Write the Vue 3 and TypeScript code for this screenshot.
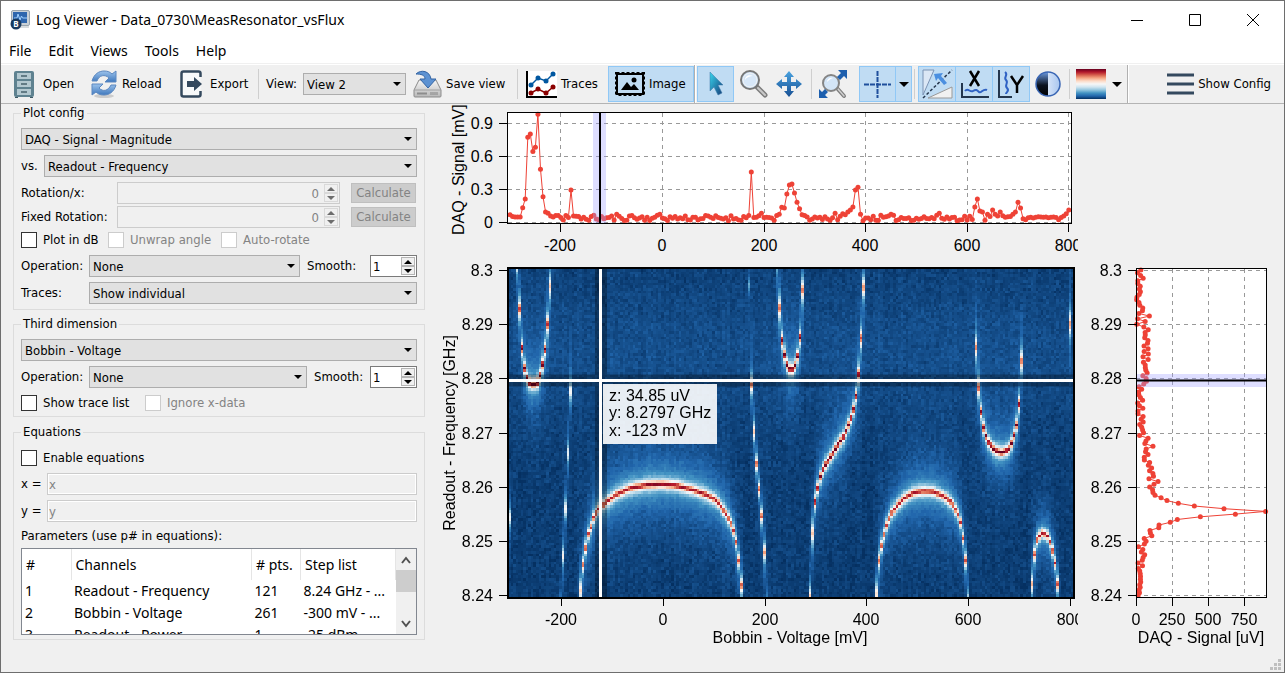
<script setup lang="ts">
import { onMounted, ref } from 'vue'

type Point = [number, number]

const menus = ['File', 'Edit', 'Views', 'Tools', 'Help']

const params = [
  { id: '1', channel: 'Readout - Frequency', pts: '121', steps: '8.24 GHz - ...' },
  { id: '2', channel: 'Bobbin - Voltage', pts: '261', steps: '-300 mV - ...' },
  { id: '3', channel: 'Readout - Power', pts: '1', steps: '-25 dBm' },
]

function makeRandom(seed: number): () => number {
  let a = seed
  return () => {
    a = (a + 0x6d2b79f5) | 0
    let t = Math.imul(a ^ (a >>> 15), 1 | a)
    t = (t + Math.imul(t ^ (t >>> 7), 61 | t)) ^ t
    return ((t ^ (t >>> 14)) >>> 0) / 4294967296
  }
}

/* Horizontal cut: signal [mV] against voltage, one sample every 5 mV */
const cutX: Record<number, number> = {
  0: 0.067, 1: 0.05, 2: 0.045, 3: 0.045, 4: 0.045, 5: 0.13, 6: 0.21, 7: 0.77, 8: 0.8, 9: 0.64,
  10: 0.68, 11: 0.98, 12: 0.48, 13: 0.23, 14: 0.09, 15: 0.08, 16: 0.055, 17: 0.045, 18: 0.06, 19: 0.06,
  22: 0.06, 24: 0.29, 42: 0.07, 48: 0.06, 59: 0.07, 95: 0.455, 94: 0.06, 99: 0.08,
  105: 0.06, 106: 0.07, 107: 0.135, 108: 0.127, 109: 0.255, 110: 0.336, 111: 0.345, 112: 0.264,
  113: 0.18, 114: 0.12, 115: 0.065, 116: 0.06, 128: 0.08, 131: 0.075, 132: 0.065, 133: 0.09,
  134: 0.11, 135: 0.136, 136: 0.29, 137: 0.315, 138: 0.07, 150: 0.07, 169: 0.08,
  183: 0.136, 184: 0.21, 185: 0.1, 186: 0.09, 188: 0.07, 190: 0.11, 191: 0.07, 192: 0.055, 193: 0.09,
  197: 0.05, 198: 0.07, 199: 0.09, 200: 0.18, 201: 0.127, 202: 0.03, 203: 0.02,
  216: 0.02, 217: 0.04, 218: 0.055, 219: 0.075, 220: 0.11,
}
const rndX = makeRandom(11)
const pointsX: Point[] = Array.from({ length: 221 }, (_, i): Point => {
  const noise = 0.012 + rndX() * 0.05
  const value = cutX[i] ?? (i > 203 && i < 216 ? 0.035 + noise * 0.2 : noise)
  return [510 + i * 2.54, 222 - value * 110]
})

/* Vertical cut: signal [uV] against frequency, one sample every 0.5 MHz */
const cutY: Record<number, number> = {
  0: 15, 20: 70, 21: 57, 22: 110, 23: 100, 24: 97, 25: 158, 26: 160, 27: 238, 28: 287, 29: 447, 30: 690, 31: 900,
  32: 611, 33: 405, 34: 294, 35: 215, 36: 174, 37: 132, 38: 118, 39: 115, 40: 95, 41: 125, 42: 153,
  43: 90, 55: 118, 100: 5, 103: 93,
}
const rndY = makeRandom(29)
const pointsY: Point[] = Array.from({ length: 121 }, (_, k): Point => {
  const mean = k < 21 ? 38 : k < 50 ? 105 : k < 59 ? 78 : k < 78 ? 34 : k < 102 ? 66 : 26
  const value = Math.max(4, cutY[k] ?? mean + (rndY() - 0.5) * 48)
  return [1136 + value * 0.144, 595.5 - k * 2.7125]
})

const toLine = (points: Point[]): string => points.map(([x, y]) => `${x.toFixed(1)},${y.toFixed(1)}`).join(' ')

const ticksTop = [
  { x: 560, label: '-200' }, { x: 662, label: '0' }, { x: 764, label: '200' },
  { x: 865, label: '400' }, { x: 967, label: '600' }, { x: 1068, label: '800' },
]
const ticksMap = [
  { x: 561, label: '-200' }, { x: 663, label: '0' }, { x: 765, label: '200' },
  { x: 866, label: '400' }, { x: 968, label: '600' }, { x: 1070, label: '800' },
]
const ticksSignal = [
  { y: 123, label: '0.9' }, { y: 156, label: '0.6' }, { y: 189, label: '0.3' }, { y: 222, label: '0' },
]
const ticksFreq = [
  { y: 270, label: '8.3' }, { y: 324, label: '8.29' }, { y: 378, label: '8.28' }, { y: 433, label: '8.27' },
  { y: 487, label: '8.26' }, { y: 541, label: '8.25' }, { y: 595, label: '8.24' },
]
const ticksSide = [
  { x: 1136, label: '0' }, { x: 1172, label: '250' }, { x: 1208, label: '500' }, { x: 1244, label: '750' },
]

/* Resonance branches across the flux map */
const branches: { gain: number; halo: number; pts: Point[] }[] = [
  { gain: 0.75, halo: 0, pts: [[507, 470], [510, 533], [511, 560]] },
  { gain: 1.15, halo: 0.9, pts: [[516, 245], [519.3, 306], [522, 348], [524.3, 367], [526.7, 377], [530, 383], [533, 384.5], [537, 383], [540, 375], [542.3, 365], [545, 349], [547.3, 327], [550, 288], [553, 200]] },
  { gain: 0.8, halo: 0, pts: [[560, 620], [562.7, 558], [565.3, 510], [567.7, 458], [570.5, 390], [571.5, 370]] },
  { gain: 0.93, halo: 1.3, pts: [[578, 650], [580.7, 590], [583.3, 564], [586, 547], [588, 535], [591, 527], [593.3, 518], [597.7, 510], [606.7, 502], [616.7, 494.3], [630, 488.3], [646.7, 485], [663, 484.3], [676.7, 485.7], [693, 490], [706.7, 495], [716.7, 501], [726.7, 515], [731.7, 525], [734, 532], [736.7, 545], [739, 563], [741.7, 590], [744, 650]] },
  { gain: 0.3, halo: 0, pts: [[748, 270], [750, 300]] },
  { gain: 1, halo: 0.1, pts: [[751, 378], [751.7, 388], [754.3, 437], [757, 469], [759.7, 495], [762.3, 523], [764.7, 560], [767, 620]] },
  { gain: 1.15, halo: 0.8, pts: [[775, 215], [777.7, 273], [780, 317], [782.3, 343], [785, 357], [787.3, 365], [791, 370.7], [795, 365], [797.7, 355], [800.3, 334], [802.7, 285], [805, 200]] },
  { gain: 1.1, halo: 1, pts: [[808, 650], [810.7, 583], [813, 525], [815.3, 501], [818, 487], [820.7, 475], [824, 467], [830, 458], [836.7, 447], [843.3, 437], [848.3, 425], [851.7, 416], [854, 407], [856.7, 392], [859, 370], [861.3, 335], [864, 280], [867, 190]] },
  { gain: 0.95, halo: 1.1, pts: [[874, 650], [876.7, 587], [879.3, 557], [882.3, 542], [884.7, 532], [887.3, 523], [891.7, 513], [896.7, 506], [903.3, 499], [913.3, 493], [923.3, 491], [933, 491.7], [943, 496], [951.7, 503], [957.3, 513], [960.7, 523], [963.3, 540], [966.3, 567], [969, 620]] },
  { gain: 1.1, halo: 1, pts: [[974.5, 320], [976.3, 357], [979, 397], [981.7, 418], [984.3, 432], [988.3, 442], [995, 450.7], [1001.7, 452.7], [1008.3, 450], [1012.3, 442], [1015, 432], [1017.3, 422], [1019.7, 399], [1022.3, 350], [1023, 335]] },
  { gain: 1, halo: 0.8, pts: [[1030, 620], [1032.7, 570], [1035, 550], [1037.3, 539], [1042.7, 532.7], [1047.7, 536.7], [1050.7, 545], [1053.3, 555], [1055.7, 568], [1058.3, 593], [1061, 650]] },
  { gain: 1.4, halo: 0, pts: [[1068.5, 270], [1070.3, 328], [1072, 390]] },
]

const palette: [number, number, number][] = [
  [5, 48, 97], [33, 102, 172], [67, 147, 195], [146, 197, 222], [209, 229, 240], [247, 247, 247],
  [253, 219, 199], [244, 165, 130], [214, 96, 77], [178, 24, 43], [103, 0, 31],
]

function paletteColor(t: number): [number, number, number] {
  const s = Math.min(0.9999, Math.max(0, t)) * (palette.length - 1)
  const i = Math.floor(s)
  const f = s - i
  const a = palette[i]
  const b = palette[i + 1]
  return [a[0] + (b[0] - a[0]) * f, a[1] + (b[1] - a[1]) * f, a[2] + (b[2] - a[2]) * f]
}

const COLS = 222
const ROWS = 121
const heat = ref<HTMLCanvasElement | null>(null)

onMounted(() => {
  const ctx = heat.value?.getContext('2d')
  if (!ctx) return
  const image = ctx.createImageData(COLS, ROWS)
  const rnd = makeRandom(7)
  for (let c = 0; c < COLS; c++) {
    const x = 509.27 + c * 2.5495
    const column = (rnd() - 0.5) * 0.014
    const peaks: { y: number; w: number; a: number; h: number }[] = []
    for (const b of branches) {
      for (let i = 0; i < b.pts.length - 1; i++) {
        const [x0, y0] = b.pts[i]
        const [x1, y1] = b.pts[i + 1]
        if (x >= x0 && x < x1) {
          const slope = Math.abs((y1 - y0) / (x1 - x0))
          peaks.push({
            y: y0 + ((y1 - y0) * (x - x0)) / (x1 - x0),
            w: 3 + Math.min(5, slope * 0.2),
            a: (b.gain * 0.8) / (1 + Math.max(0, slope - 10) * 0.03),
            h: (b.halo * 0.13) / (1 + slope * 0.25),
          })
        }
      }
    }
    for (let r = 0; r < ROWS; r++) {
      const y = 270 + r * 2.7167
      let v = 0.024 + column + 0.032 * Math.exp(-(((y - 350) / 70) ** 2)) + (rnd() + rnd() - 1) * 0.032
      for (const p of peaks) {
        const d = y - p.y
        v += p.a / Math.pow(1 + (d / p.w) ** 2, 0.9) + p.h * Math.exp(-Math.abs(d) / 26)
      }
      const [red, green, blue] = paletteColor(v)
      const o = (r * COLS + c) * 4
      image.data[o] = red
      image.data[o + 1] = green
      image.data[o + 2] = blue
      image.data[o + 3] = 255
    }
  }
  ctx.putImageData(image, 0, 0)
})
</script>

<template>
  <div class="window">
    <header class="titlebar">
      <svg class="app-icon" viewBox="0 0 20 20" aria-hidden="true">
        <rect x="1.500" y="0.500" width="18" height="15" rx="1.500" fill="#c9d0d6" stroke="#9aa5ae" />
        <rect x="3" y="2" width="14" height="11" fill="#2f66ad" />
        <path d="M4 8h3l1-4 2 6 1.500-4 1 2H17" fill="none" stroke="#9fd0ff" />
        <path d="M10 18h9v-2h-9z" fill="#d8dcdf" />
        <circle cx="6" cy="14" r="5.500" fill="#17395f" />
        <text x="6" y="17" text-anchor="middle" font-size="8" font-weight="700" fill="#fff">B</text>
      </svg>
      <h1>Log Viewer - Data_0730\MeasResonator_vsFlux</h1>
      <button class="win" aria-label="Minimize"><svg viewBox="0 0 12 12"><path d="M0 6.500h12" /></svg></button>
      <button class="win" aria-label="Maximize"><svg viewBox="0 0 12 12"><path d="M.5.500h11v11H.5z" /></svg></button>
      <button class="win" aria-label="Close"><svg viewBox="0 0 12 12"><path d="M0 0l12 12M12 0L0 12" /></svg></button>
    </header>

    <nav class="menubar">
      <button v-for="m in menus" :key="m">{{ m }}</button>
    </nav>

    <div class="toolbar" role="toolbar">
      <button class="tool open">
        <svg width="20" height="27" viewBox="0 0 20 27">
          <rect x="0" y="0" width="20" height="26" rx="2" fill="#5f8290" />
          <path d="M1 26h3v1H1zM16 26h3v1h-3z" fill="#3d5864" />
          <path d="M3 2h14v6H3zM3 10h14v6H3zM3 18h14v6H3z" fill="#b3c8d0" />
          <path d="M7 5h6M7 13h6M7 21h6" stroke="#48616c" stroke-width="1.500" />
        </svg>
        Open
      </button>
      <button class="tool reload">
        <svg width="26" height="28" viewBox="0 0 26 28">
          <defs>
            <linearGradient id="reloadFill" x1="0" y1="0" x2="0" y2="1">
              <stop offset="0" stop-color="#9cc3ec" /><stop offset="1" stop-color="#3f78bd" />
            </linearGradient>
          </defs>
          <ellipse cx="13" cy="26" rx="10" ry="2" fill="#000" opacity=".15" />
          <path d="M1 11C3 4 8 1 13 1c4 0 6 1 8 3l4-3v11H14l4-4c-4-4-10-3-12 3z" fill="url(#reloadFill)" stroke="#5c88c0" />
          <path d="M25 15c-2 7-7 10-12 10-4 0-6-1-8-3l-4 3V14h11l-4 4c4 4 9 3 12-3z" fill="url(#reloadFill)" stroke="#5c88c0" />
        </svg>
        Reload
      </button>
      <button class="tool export">
        <svg width="23" height="28" viewBox="0 0 23 28">
          <path d="M20.500 7V3.500q0-2-2-2h-15q-2 0-2 2v21q0 2 2 2h15q2 0 2-2V21" fill="#f7f9fa" stroke="#34495e" stroke-width="2.500" />
          <path d="M7 11h7V7l8 7-8 7v-4H7z" fill="#34495e" />
        </svg>
        Export
      </button>
      <span class="sep"></span>
      <label class="view-label" for="view">View:</label>
      <span class="select view-select"><select id="view"><option>View 2</option></select></span>
      <button class="tool save">
        <svg width="29" height="28" viewBox="0 0 29 28">
          <defs>
            <linearGradient id="diskFill" x1="0" y1="0" x2="0" y2="1">
              <stop offset="0" stop-color="#f6f6f6" /><stop offset="1" stop-color="#b8b8b8" />
            </linearGradient>
          </defs>
          <path d="M6 10h17l5 10v6q0 1-1 1H2q-1 0-1-1v-6z" fill="url(#diskFill)" stroke="#8b8b8b" />
          <path d="M1 20h27" stroke="#a0a0a0" />
          <path d="M4 23.500h10" stroke="#8d8d8d" stroke-width="2" />
          <path d="M18 22v3M20 22v3M22 22v3M24 22v3" stroke="#858585" />
          <path d="M3 4c5-5 14-3 15 5h5l-8 9-8-9h5c0-4-4-5-9-5z" fill="#5d92d2" stroke="#3465a4" />
        </svg>
        Save view
      </button>
      <span class="sep"></span>
      <button class="tool traces">
        <svg width="31" height="27" viewBox="0 0 31 27">
          <rect width="31" height="27" fill="#fff" />
          <path d="M1 0v26h30" fill="none" stroke="#000" stroke-width="2" />
          <path d="M5 14l7-7 8 3 7-7" fill="none" stroke="#0057a0" stroke-width="1.500" />
          <path d="M5 22l7-4 8 4 7-6" fill="none" stroke="#8b0000" stroke-width="1.500" />
          <g fill="#0057a0"><circle cx="5" cy="14" r="2.500" /><circle cx="12" cy="7" r="2.500" /><circle cx="20" cy="10" r="2.500" /><circle cx="27" cy="3" r="2.500" /></g>
          <g fill="#8b0000"><circle cx="5" cy="22" r="2.500" /><circle cx="12" cy="18" r="2.500" /><circle cx="20" cy="22" r="2.500" /><circle cx="27" cy="16" r="2.500" /></g>
        </svg>
        Traces
      </button>
      <button class="tool image on" aria-pressed="true">
        <svg width="30" height="24" viewBox="0 0 30 24">
          <rect x="2" y="2" width="26" height="20" fill="none" stroke="#000" stroke-width="2" />
          <rect x="1.500" y="1.500" width="27" height="21" fill="none" stroke="#000" stroke-width="3" stroke-dasharray="3 2" />
          <rect x="4" y="4" width="22" height="16" fill="#c0dcf3" />
          <path d="M6 18l6-8 4 5 3-3 5 6z" />
          <circle cx="19" cy="8" r="2.500" />
        </svg>
        Image
      </button>
      <span class="sep full"></span>
      <button class="tool pointer on" aria-label="Select" aria-pressed="true">
        <svg width="18" height="26" viewBox="0 0 18 26">
          <defs>
            <linearGradient id="pointerFill" x1="0" y1="0" x2="1" y2="1">
              <stop offset="0" stop-color="#38d6ee" /><stop offset="1" stop-color="#143c78" />
            </linearGradient>
          </defs>
          <path d="M3 1v19l4-4 4 8 4-2-4-8h5z" fill="url(#pointerFill)" stroke="#3b76a6" stroke-width=".5" />
        </svg>
      </button>
      <button class="tool glass" aria-label="Zoom">
        <svg width="30" height="30" viewBox="0 0 30 30">
          <path d="M18 17l9 9" stroke="#7d7d7d" stroke-width="5" stroke-linecap="round" />
          <path d="M20 19l7 7" stroke="#c8c8c8" stroke-width="2" stroke-linecap="round" />
          <circle cx="12" cy="11" r="9" fill="#c5dcf3" stroke="#777" stroke-width="2" />
          <circle cx="12" cy="11" r="7" fill="#d7e7f8" stroke="#f4f4f4" />
          <path d="M7 11c0-4 4-6 8-4-3 0-6 1-8 4z" fill="#fff" />
        </svg>
      </button>
      <button class="tool move" aria-label="Pan">
        <svg width="26" height="26" viewBox="0 0 26 26">
          <defs>
            <linearGradient id="moveFill" x1="0" y1="0" x2="0" y2="1">
              <stop offset="0" stop-color="#4aa3e0" /><stop offset="1" stop-color="#174f93" />
            </linearGradient>
          </defs>
          <path d="M13 0l5 6h-3v5h5V8l6 5-6 5v-3h-5v5h3l-5 6-5-6h3v-5H6v3l-6-5 6-5v3h5V6H8z" fill="url(#moveFill)" />
        </svg>
      </button>
      <span class="sep"></span>
      <button class="tool autozoom" aria-label="Autoscale">
        <svg width="30" height="30" viewBox="0 0 30 30">
          <path d="M18 18l8 9" stroke="#7d7d7d" stroke-width="4" stroke-linecap="round" />
          <path d="M20 20l6 7" stroke="#d0d0d0" stroke-width="1.500" stroke-linecap="round" />
          <circle cx="13" cy="14" r="8" fill="#d3e5f7" stroke="#858585" stroke-width="2" />
          <path d="M9 13c0-3 3-5 6-4-3 1-4 2-6 4z" fill="#fff" />
          <path d="M29 1v9l-3-3-4 4-3-3 4-4-3-3zM1 29v-9l3 3 3-3 3 3-3 3 3 3z" fill="#1d5fae" />
        </svg>
      </button>
      <button class="tool cross on" aria-label="Cursor" aria-pressed="true">
        <svg width="27" height="27" viewBox="0 0 27 27">
          <path d="M13.500 0v27M0 13.500h27" stroke="#1f4f9c" stroke-width="2" stroke-dasharray="5 1" />
        </svg>
      </button>
      <button class="tool drop on" aria-label="Cursor options"><i class="caret"></i></button>
      <span class="sep"></span>
      <button class="tool opt on" aria-label="Rotate" aria-pressed="true">
        <svg width="31" height="30" viewBox="0 0 31 30">
          <path d="M1 1h11L1 26z" fill="#dbe7f5" stroke="#7b93b4" />
          <path d="M6 29l24-11v11z" fill="#f1f1f1" stroke="#999" />
          <path d="M1 29L30 1" stroke="#25364d" stroke-width="1.500" stroke-dasharray="3 2" />
          <path d="M12 5l9-1-2 3 6 7-3 2-6-7-2 3z" fill="#4b8fe0" />
        </svg>
      </button>
      <button class="tool opt on" aria-label="Subtract X" aria-pressed="true">
        <svg width="29" height="30" viewBox="0 0 29 30">
          <path d="M2 14v14h27" fill="none" stroke="#24364d" stroke-width="2" />
          <path d="M10 2l9 15M19 2L10 17" stroke="#000" stroke-width="2.500" />
          <path d="M5 22c3-4 5 2 8 0s4-1 6 1 4-4 8-2" fill="none" stroke="#2f62c4" stroke-width="2" />
        </svg>
      </button>
      <button class="tool opt on" aria-label="Subtract Y" aria-pressed="true">
        <svg width="29" height="30" viewBox="0 0 29 30">
          <path d="M2 1v27h13" fill="none" stroke="#24364d" stroke-width="2" />
          <path d="M8 3c4 3-2 5 1 8s-2 5 1 8-1 4-1 6" fill="none" stroke="#2f62c4" stroke-width="2" />
          <path d="M14 7l6 9 6-9M20 16v8" fill="none" stroke="#000" stroke-width="2.500" />
        </svg>
      </button>
      <button class="tool contrast" aria-label="Contrast">
        <svg width="28" height="28" viewBox="0 0 28 28">
          <defs>
            <linearGradient id="darkHalf" x1="0" y1="0" x2="0" y2="1">
              <stop offset="0" stop-color="#6d9be0" /><stop offset=".55" stop-color="#0a1220" /><stop offset="1" stop-color="#000" />
            </linearGradient>
            <linearGradient id="lightHalf" x1="0" y1="0" x2="1" y2="0">
              <stop offset="0" stop-color="#fff" /><stop offset="1" stop-color="#a9c6ef" />
            </linearGradient>
          </defs>
          <circle cx="14" cy="14" r="12" fill="url(#lightHalf)" />
          <path d="M14 2a12 12 0 0 0 0 24z" fill="url(#darkHalf)" />
          <circle cx="14" cy="14" r="12" fill="none" stroke="#3a66b4" stroke-width="1.500" />
        </svg>
      </button>
      <span class="sep"></span>
      <button class="tool cmap" aria-label="Color map">
        <span class="gradient"></span>
        <i class="caret"></i>
      </button>
      <span class="sep full"></span>
      <button class="tool config">
        <svg width="27" height="22" viewBox="0 0 27 22">
          <path d="M0 2h27M0 11h27M0 20h27" stroke="#34495e" stroke-width="3" />
        </svg>
        Show Config
      </button>
    </div>

    <main class="body">
      <form class="side">
        <fieldset>
          <legend>Plot config</legend>
          <span class="select"><select aria-label="Signal"><option>DAQ - Signal - Magnitude</option></select></span>
          <div class="row">
            <label class="vs" for="versus">vs.</label>
            <span class="select"><select id="versus"><option>Readout - Frequency</option></select></span>
          </div>
          <div class="rotations">
            <label for="rot">Rotation/x:</label>
            <span class="spin off">
              <input id="rot" type="text" value="0" disabled>
              <span class="steps"><button type="button" disabled aria-label="Increase"></button><button type="button" disabled aria-label="Decrease"></button></span>
            </span>
            <button type="button" class="calc" disabled>Calculate</button>
            <label for="fixed">Fixed Rotation:</label>
            <span class="spin off">
              <input id="fixed" type="text" value="0" disabled>
              <span class="steps"><button type="button" disabled aria-label="Increase"></button><button type="button" disabled aria-label="Decrease"></button></span>
            </span>
            <button type="button" class="calc" disabled>Calculate</button>
          </div>
          <div class="checks tight">
            <label class="c-db"><input type="checkbox">Plot in dB</label>
            <label class="c-unwrap"><input type="checkbox" disabled>Unwrap angle</label>
            <label><input type="checkbox" disabled>Auto-rotate</label>
          </div>
          <div class="row after-checks">
            <label class="key" for="op1">Operation:</label>
            <span class="select"><select id="op1"><option>None</option></select></span>
            <label class="smooth" for="smooth1">Smooth:</label>
            <span class="spin small">
              <input id="smooth1" type="text" value="1">
              <span class="steps"><button type="button" aria-label="Increase"></button><button type="button" aria-label="Decrease"></button></span>
            </span>
          </div>
          <div class="row">
            <label class="key" for="traces">Traces:</label>
            <span class="select"><select id="traces"><option>Show individual</option></select></span>
          </div>
        </fieldset>

        <fieldset>
          <legend>Third dimension</legend>
          <span class="select"><select aria-label="Third dimension channel"><option>Bobbin - Voltage</option></select></span>
          <div class="row">
            <label class="key" for="op2">Operation:</label>
            <span class="select"><select id="op2"><option>None</option></select></span>
            <label class="smooth near" for="smooth2">Smooth:</label>
            <span class="spin small">
              <input id="smooth2" type="text" value="1">
              <span class="steps"><button type="button" aria-label="Increase"></button><button type="button" aria-label="Decrease"></button></span>
            </span>
          </div>
          <div class="checks">
            <label class="c-list"><input type="checkbox">Show trace list</label>
            <label><input type="checkbox" disabled>Ignore x-data</label>
          </div>
        </fieldset>

        <fieldset class="equations">
          <legend>Equations</legend>
          <div class="checks first">
            <label><input type="checkbox">Enable equations</label>
          </div>
          <div class="row after-checks">
            <label class="eq" for="eqx">x =</label>
            <input id="eqx" class="formula" type="text" value="x" disabled>
          </div>
          <div class="row">
            <label class="eq" for="eqy">y =</label>
            <input id="eqy" class="formula" type="text" value="y" disabled>
          </div>
          <p class="caption">Parameters (use p# in equations):</p>
          <div class="list">
            <div class="scroller">
              <table>
                <thead>
                  <tr><th class="col-id">#</th><th>Channels</th><th class="col-pts"># pts.</th><th class="col-steps">Step list</th></tr>
                </thead>
                <tbody>
                  <tr v-for="p in params" :key="p.id">
                    <td>{{ p.id }}</td><td>{{ p.channel }}</td><td>{{ p.pts }}</td><td>{{ p.steps }}</td>
                  </tr>
                </tbody>
              </table>
            </div>
            <div class="scrollbar">
              <button type="button" aria-label="Scroll up"><svg viewBox="0 0 10 10"><path d="M1 8l4-5 4 5" /></svg></button>
              <span class="thumb"></span>
              <button type="button" aria-label="Scroll down"><svg viewBox="0 0 10 10"><path d="M1 2l4 5 4-5" /></svg></button>
            </div>
          </div>
        </fieldset>
      </form>

      <section class="plots">
        <svg class="plot" viewBox="430 104 648 158" role="img" aria-label="Signal against voltage">
          <rect x="507" y="112" width="565" height="111" fill="#fff" />
          <g class="grid">
            <path v-for="t in ticksTop" :key="t.label" :d="`M${t.x + 0.5} 113V223`" />
            <path v-for="t in ticksSignal" :key="t.label" :d="`M508 ${t.y + 0.5}H1071`" />
          </g>
          <polyline class="trace" :points="toLine(pointsX)" />
          <g class="dots"><circle v-for="(p, i) in pointsX" :key="i" :cx="p[0]" :cy="p[1]" r="2.500" /></g>
          <rect x="593" y="113" width="13" height="110" class="band" />
          <path d="M600 113V223" class="marker" />
          <rect x="507.500" y="112.500" width="564" height="111" class="frame" />
          <g class="tick">
            <path v-for="t in ticksTop" :key="t.label" :d="`M${t.x + 0.5} 223v9`" />
            <path v-for="t in ticksSignal" :key="t.label" :d="`M507 ${t.y + 0.5}h-8`" />
          </g>
          <text v-for="t in ticksTop" :key="t.label" :x="t.x" y="251" text-anchor="middle">{{ t.label }}</text>
          <text v-for="t in ticksSignal" :key="t.label" x="493" :y="t.y + 6" text-anchor="end">{{ t.label }}</text>
          <text transform="translate(464 235) rotate(-90)">DAQ - Signal [mV]</text>
        </svg>
        <span></span>
        <svg class="plot" viewBox="430 262 648 390" role="img" aria-label="Signal map of frequency against voltage">
          <foreignObject x="508" y="269" width="566" height="328">
            <canvas ref="heat" class="heat" :width="COLS" :height="ROWS"></canvas>
          </foreignObject>
          <path d="M601 269V597M509 380.500H1074" stroke="#000" stroke-width="12" opacity=".3" />
          <rect x="508" y="268" width="566" height="330" fill="none" stroke="#000" stroke-width="2" />
          <path d="M600.500 269V597M509 380.500H1073" stroke="#fff" stroke-width="3" />
          <rect x="603" y="384" width="114" height="60" fill="#fff" opacity=".9" />
          <text x="609" y="401">z: 34.85 uV</text>
          <text x="609" y="418">y: 8.2797 GHz</text>
          <text x="609" y="436">x: -123 mV</text>
          <g class="tick">
            <path v-for="t in ticksMap" :key="t.label" :d="`M${t.x + 0.5} 598v8`" />
            <path v-for="t in ticksFreq" :key="t.label" :d="`M507 ${t.y + 0.5}h-8`" />
          </g>
          <text v-for="t in ticksMap" :key="t.label" :x="t.x" y="625" text-anchor="middle">{{ t.label }}</text>
          <text v-for="t in ticksFreq" :key="t.label" x="493" :y="t.y + 6" text-anchor="end">{{ t.label }}</text>
          <text x="790" y="643" text-anchor="middle">Bobbin - Voltage [mV]</text>
          <text transform="translate(455 433) rotate(-90)" text-anchor="middle">Readout - Frequency [GHz]</text>
        </svg>
        <svg class="plot" viewBox="1078 262 200 390" role="img" aria-label="Signal against frequency">
          <rect x="1136" y="268" width="131" height="329" fill="#fff" />
          <g class="grid">
            <path v-for="t in ticksSide" :key="t.label" :d="`M${t.x + 0.5} 269V597`" />
            <path v-for="t in ticksFreq" :key="t.label" :d="`M1136 ${t.y + 0.5}H1266`" />
          </g>
          <polyline class="trace" :points="toLine(pointsY)" />
          <g class="dots"><circle v-for="(p, i) in pointsY" :key="i" :cx="p[0]" :cy="p[1]" r="2.500" /></g>
          <rect x="1136" y="374" width="130" height="13" class="band" />
          <path d="M1136 380.500H1266" class="marker" />
          <rect x="1136.500" y="268.500" width="130" height="329" class="frame" />
          <g class="tick">
            <path v-for="t in ticksSide" :key="t.label" :d="`M${t.x + 0.5} 598v8`" />
            <path v-for="t in ticksFreq" :key="t.label" :d="`M1136 ${t.y + 0.5}h-8`" />
          </g>
          <text v-for="t in ticksSide" :key="t.label" :x="t.x" y="625" text-anchor="middle">{{ t.label }}</text>
          <text v-for="t in ticksFreq" :key="t.label" x="1122" :y="t.y + 6" text-anchor="end">{{ t.label }}</text>
          <text x="1201" y="643" text-anchor="middle">DAQ - Signal [uV]</text>
        </svg>
      </section>
    </main>

    <svg class="grip" viewBox="0 0 12 12" aria-hidden="true">
      <path d="M8 0h3v3H8zM4 4h3v3H4zM8 4h3v3H8zM0 8h3v3H0zM4 8h3v3H4zM8 8h3v3H8z" fill="#bfbfbf" />
    </svg>
  </div>
</template>

<style>
body {
  margin: 0;
  background: #f0f0f0;
}
</style>

<style scoped>
.window {
  position: relative;
  display: flex;
  flex-direction: column;
  box-sizing: border-box;
  min-height: 100vh;
  border: 1px solid #6e6e6e;
  background: #f0f0f0;
  color: #000;
  font: 13px/16px "DejaVu Sans Condensed", "Noto Sans", sans-serif;
}
button, select, input {
  box-sizing: border-box;
  margin: 0;
  font: inherit;
  color: inherit;
}
button {
  padding: 0;
  border: 0;
  background: none;
}
svg { flex: none; }

.titlebar {
  display: flex;
  align-items: center;
  height: 37px;
  padding: 0 2px 0 9px;
  background: #fff;
  font-family: "Noto Sans", sans-serif;
}
.app-icon { width: 20px; height: 20px; }
.titlebar h1 {
  flex: 1;
  margin: 0 0 0 6px;
  font-size: 14px;
  line-height: 20px;
  font-weight: 400;
}
.win {
  display: flex;
  align-items: center;
  justify-content: center;
  width: 58px;
  height: 37px;
}
.win svg { width: 12px; height: 12px; fill: none; stroke: #000; }

.menubar {
  display: flex;
  gap: 17px;
  height: 25px;
  padding-left: 8px;
  border-bottom: 1px solid #f0f0f0;
  background: #fff;
  font: 14px/24px "Noto Sans", sans-serif;
}

.toolbar {
  display: flex;
  align-items: center;
  height: 38px;
  padding-left: 9px;
  border-top: 1px solid #fff;
  border-bottom: 1px solid #b4b4b4;
}
.tool {
  display: flex;
  flex: none;
  align-items: center;
  box-sizing: border-box;
  height: 36px;
  border: 1px solid transparent;
  white-space: nowrap;
}
.tool.on { background: #c0dcf3; border-color: #90c8f6; }
.open { width: 77px; padding-left: 3px; gap: 9px; }
.reload { width: 88px; padding-left: 3px; gap: 5px; }
.export { width: 83px; padding-left: 4px; gap: 7px; }
.sep { flex: none; width: 1px; height: 30px; background: #cfcfcf; }
.sep.full { height: 38px; width: 1px; background: #b0b0b0; box-shadow: 1px 0 #fff; }
.view-label { width: 37px; margin-left: 7px; }
.toolbar .view-select { flex: 0 0 103px; }
.save { width: 107px; margin-left: 4px; padding-left: 2px; gap: 4px; }
.traces { width: 84px; margin-left: 6px; padding-left: 1px; gap: 4px; }
.image { width: 86px; padding-left: 6px; gap: 4px; }
.pointer { width: 37px; margin-left: 2px; justify-content: center; }
.glass { width: 37px; justify-content: center; }
.move { width: 36px; justify-content: center; margin-right: 4px; }
.autozoom { width: 42px; justify-content: center; margin-right: 5px; }
.cross { width: 37px; justify-content: center; }
.drop { width: 17px; margin: 0 2px 0 -1px; justify-content: center; }
.opt { width: 38px; justify-content: center; }
.opt + .opt { margin-left: -1px; }
.sep + .opt { margin-left: 3px; }
.contrast { width: 35px; margin-right: 4px; justify-content: center; }
.cmap { width: 49px; margin: 0 3px 0 5px; gap: 6px; }
.gradient {
  width: 30px;
  height: 30px;
  background: linear-gradient(#67001f, #b2182b 10%, #d6604d 20%, #f4a582 30%, #fddbc7 40%, #f7f7f7 50%, #d1e5f0 60%, #92c5de 70%, #4393c3 80%, #2166ac 90%, #053061);
}
.caret {
  flex: none;
  border: 5px solid transparent;
  border-top-color: #000;
  border-bottom: 0;
}
.config { margin-left: auto; margin-right: 12px; gap: 4px; }

.body { display: flex; flex: 1; align-items: flex-start; }
.side {
  flex: none;
  box-sizing: border-box;
  width: 429px;
  padding: 1px 5px 0 12px;
}
fieldset {
  display: flex;
  flex-direction: column;
  gap: 5px;
  min-width: 0;
  margin: 0 0 6px;
  padding: 7px 7px 5px;
  border: 1px solid #dcdcdc;
}
legend { padding: 0 2px; height: 16px; }
.row { display: flex; align-items: center; }
.vs { width: 23px; }
.key { width: 68px; }
.eq { width: 26px; }
.select { position: relative; display: block; flex: 1; }
.select select {
  display: block;
  width: 100%;
  height: 22px;
  padding: 1px 16px 0 3px;
  appearance: none;
  border: 1px solid #adadad;
  border-radius: 0;
  background: #e1e1e1;
}
fieldset > .select { flex: none; }
.select::after {
  content: "";
  position: absolute;
  right: 5px;
  top: 9px;
  border: 4px solid transparent;
  border-top-color: #000;
  border-bottom: 0;
  pointer-events: none;
}
.rotations {
  display: grid;
  grid-template-columns: 96px 1fr 65px;
  align-items: center;
  row-gap: 2px;
  padding-right: 1px;
}
.rotations .spin { margin-right: 11px; }
.spin {
  display: flex;
  box-sizing: border-box;
  height: 22px;
  padding: 1px;
  border: 1px solid #7a7a7a;
  background: #fff;
}
.spin input {
  flex: 1;
  width: 0;
  padding: 1px 1px 0;
  border: 0;
  background: none;
}
.spin.off { border-color: #ccc; background: #f0f0f0; }
.spin.off input { padding-right: 5px; text-align: right; color: #838383; }
.spin.small { width: 47px; }
.steps { display: flex; flex-direction: column; width: 14px; }
.steps button {
  display: flex;
  flex: 1;
  align-items: center;
  justify-content: center;
  border: 1px solid #b5b5b5;
  background: #f0f0f0;
}
.steps button::before { content: ""; border: 4px solid transparent; border-bottom-color: #000; border-top: 0; }
.steps button + button::before { border: 4px solid transparent; border-top-color: #000; border-bottom: 0; }
.off .steps button { border-color: #d9d9d9; }
.off .steps button::before { border-bottom-color: #6d6d6d; }
.off .steps button + button::before { border-bottom-color: transparent; border-top-color: #6d6d6d; }
.calc {
  height: 20px;
  border: 1px solid #bfbfbf;
  background: #ccc;
  color: #838383;
}
.smooth { width: 63px; margin-left: 7px; }
.smooth.near { width: 56px; }
.checks { display: flex; margin-top: 2px; }
.checks.tight { margin-top: -1px; }
.checks.first { margin-top: 0; }
.checks label { display: flex; align-items: center; gap: 6px; white-space: nowrap; }
.checks label:has(:disabled) { color: #838383; }
.checks input {
  width: 16px;
  height: 16px;
  appearance: none;
  border: 1px solid #333;
  background: #fff;
}
.checks input:disabled { border-color: #ccc; }
.c-db { width: 87px; }
.c-unwrap { width: 113px; }
.c-list { width: 124px; }
.after-checks { margin-top: 2px; }
.equations { margin-top: 7px; padding: 10px 7px 4px; }
.formula {
  flex: 1;
  height: 22px;
  padding: 0 1px;
  border: 1px solid #ccc;
  outline: 1px solid #fff;
  outline-offset: -2px;
  background: #f0f0f0;
  color: #838383;
}
.caption { margin: 1px 0 -1px; }
.list {
  display: flex;
  box-sizing: border-box;
  height: 87px;
  border: 1px solid #828790;
  background: #fff;
  font: 14px/22px "Noto Sans", sans-serif;
}
.scroller { flex: 1; overflow: hidden; }
table { width: 100%; border-collapse: collapse; table-layout: fixed; }
th { height: 31px; padding: 0 4px; border-right: 1px solid #e5e5e5; font-weight: 400; text-align: left; white-space: nowrap; box-sizing: border-box; }
td { height: 22px; padding: 0 3px; white-space: nowrap; }
.col-id { width: 49px; }
.col-pts { width: 49px; }
.col-steps { width: 95px; }
.scrollbar {
  display: flex;
  flex-direction: column;
  width: 20px;
  background: #f0f0f0;
}
.scrollbar button { height: 21px; }
.scrollbar button:last-child { margin-top: auto; }
.scrollbar svg { width: 10px; height: 10px; fill: none; stroke: #505050; stroke-width: 2; }
.thumb { height: 22px; background: #cdcdcd; }

.plots {
  flex: 1;
  display: grid;
  grid-template-columns: 648fr 200fr;
  padding-right: 6px;
}
.plot {
  display: block;
  width: 100%;
  font: 16px "Liberation Sans", Arial, sans-serif;
}
.grid path { stroke: #999; stroke-dasharray: 4 4; fill: none; }
.trace { fill: none; stroke: #ee4236; }
.dots { fill: #ee4236; }
.band { fill: #a0a0ff; opacity: 0.35; }
.marker { stroke: #000; stroke-width: 2; }
.frame { fill: none; stroke: #000; }
.tick path { stroke: #000; }
.heat { display: block; width: 100%; height: 100%; image-rendering: pixelated; }
.grip { position: absolute; right: 2px; bottom: 1px; width: 12px; height: 12px; }
</style>
